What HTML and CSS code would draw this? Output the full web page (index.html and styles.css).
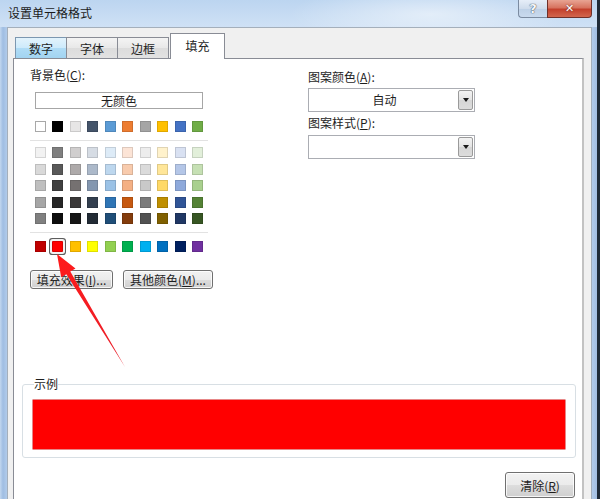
FILE: index.html
```html
<!DOCTYPE html>
<html lang="zh-CN">
<head>
<meta charset="utf-8">
<title>设置单元格格式</title>
<link rel="stylesheet" href="styles.css">
</head>
<body>
<div class="window">
  <div class="titlebar">
    <span class="title">设置单元格格式</span>
    <div class="caption">
      <div class="cap-btn help">?</div>
      <div class="cap-btn close">✕</div>
    </div>
  </div>
  <div class="client">
    <div class="tabs">
      <div class="tab hover">数字</div>
      <div class="tab">字体</div>
      <div class="tab">边框</div>
      <div class="tab active">填充</div>
    </div>
    <div class="panel">
      <div class="top">
        <div class="bg-col">
          <div class="label">背景色(<u>C</u>):</div>
          <div class="no-color">无颜色</div>
          <div class="swatch-row">
            <span class="sw white" style="background:#FFFFFF"></span>
            <span class="sw" style="background:#000000"></span>
            <span class="sw" style="background:#E7E6E6"></span>
            <span class="sw" style="background:#44546A"></span>
            <span class="sw" style="background:#5B9BD5"></span>
            <span class="sw" style="background:#ED7D31"></span>
            <span class="sw" style="background:#A5A5A5"></span>
            <span class="sw" style="background:#FFC000"></span>
            <span class="sw" style="background:#4472C4"></span>
            <span class="sw" style="background:#70AD47"></span>
          </div>
          <div class="sep"></div>
          <div class="theme-grid">
            <span class="sw" style="background:#F2F2F2"></span>
            <span class="sw" style="background:#7F7F7F"></span>
            <span class="sw" style="background:#D0CECE"></span>
            <span class="sw" style="background:#D6DCE4"></span>
            <span class="sw" style="background:#DDEBF7"></span>
            <span class="sw" style="background:#FCE4D6"></span>
            <span class="sw" style="background:#EDEDED"></span>
            <span class="sw" style="background:#FFF2CC"></span>
            <span class="sw" style="background:#D9E1F2"></span>
            <span class="sw" style="background:#E2EFDA"></span>

            <span class="sw" style="background:#D9D9D9"></span>
            <span class="sw" style="background:#595959"></span>
            <span class="sw" style="background:#AEAAAA"></span>
            <span class="sw" style="background:#ACB9CA"></span>
            <span class="sw" style="background:#BDD7EE"></span>
            <span class="sw" style="background:#F8CBAD"></span>
            <span class="sw" style="background:#DBDBDB"></span>
            <span class="sw" style="background:#FFE699"></span>
            <span class="sw" style="background:#B4C6E7"></span>
            <span class="sw" style="background:#C6E0B4"></span>

            <span class="sw" style="background:#BFBFBF"></span>
            <span class="sw" style="background:#404040"></span>
            <span class="sw" style="background:#757171"></span>
            <span class="sw" style="background:#8497B0"></span>
            <span class="sw" style="background:#9BC2E6"></span>
            <span class="sw" style="background:#F4B084"></span>
            <span class="sw" style="background:#C9C9C9"></span>
            <span class="sw" style="background:#FFD966"></span>
            <span class="sw" style="background:#8EA9DB"></span>
            <span class="sw" style="background:#A9D08E"></span>

            <span class="sw" style="background:#A6A6A6"></span>
            <span class="sw" style="background:#262626"></span>
            <span class="sw" style="background:#3A3838"></span>
            <span class="sw" style="background:#333F4F"></span>
            <span class="sw" style="background:#2F75B5"></span>
            <span class="sw" style="background:#C65911"></span>
            <span class="sw" style="background:#7B7B7B"></span>
            <span class="sw" style="background:#BF8F00"></span>
            <span class="sw" style="background:#305496"></span>
            <span class="sw" style="background:#548235"></span>

            <span class="sw" style="background:#808080"></span>
            <span class="sw" style="background:#0D0D0D"></span>
            <span class="sw" style="background:#161616"></span>
            <span class="sw" style="background:#222B35"></span>
            <span class="sw" style="background:#1F4E78"></span>
            <span class="sw" style="background:#833C0C"></span>
            <span class="sw" style="background:#525252"></span>
            <span class="sw" style="background:#806000"></span>
            <span class="sw" style="background:#203764"></span>
            <span class="sw" style="background:#375623"></span>
          </div>
          <div class="sep"></div>
          <div class="swatch-row std">
            <span class="sw" style="background:#C00000"></span>
            <span class="sw selected" style="background:#FF0000"></span>
            <span class="sw" style="background:#FFC000"></span>
            <span class="sw" style="background:#FFFF00"></span>
            <span class="sw" style="background:#92D050"></span>
            <span class="sw" style="background:#00B050"></span>
            <span class="sw" style="background:#00B0F0"></span>
            <span class="sw" style="background:#0070C0"></span>
            <span class="sw" style="background:#002060"></span>
            <span class="sw" style="background:#7030A0"></span>
          </div>
          <div class="btn-row">
            <div class="btn fx">填充效果(<u>I</u>)...</div>
            <div class="btn more">其他颜色(<u>M</u>)...</div>
          </div>
        </div>
        <div class="pattern-col">
          <div class="label">图案颜色(<u>A</u>):</div>
          <div class="combo">
            <span class="combo-text">自动</span>
            <span class="combo-btn"><span class="tri"></span></span>
          </div>
          <div class="label second">图案样式(<u>P</u>):</div>
          <div class="combo combo2">
            <span class="combo-text"></span>
            <span class="combo-btn"><span class="tri"></span></span>
          </div>
        </div>
      </div>
      <fieldset class="sample">
        <legend>示例</legend>
        <div class="sample-fill"></div>
      </fieldset>
      <div class="footer">
        <div class="btn clear">清除(<u>R</u>)</div>
      </div>
    </div>
  </div>
  <svg class="arrow" width="600" height="499" viewBox="0 0 600 499" aria-hidden="true">
    <defs>
      <linearGradient id="ag" x1="0" y1="0" x2="1" y2="1">
        <stop offset="0" stop-color="#ff1a1a"/>
        <stop offset="1" stop-color="#e8202c"/>
      </linearGradient>
    </defs>
    <polygon fill="url(#ag)" points="57,254 75.5,268.5 70.3,271.6 125,367 66.4,274.2 61.2,277.3"/>
  </svg>
</div>
</body>
</html>
```

FILE: styles.css
```css
* { box-sizing: border-box; }

html, body {
  margin: 0;
  padding: 0;
  background: #ffffff;
}

body {
  font-family: "Noto Sans CJK SC", "Microsoft YaHei", sans-serif;
  font-size: 12px;
  color: #1e1e1e;
}

u { text-decoration: underline; text-underline-offset: 1px; }

.window {
  position: relative;
  width: 600px;
  height: 499px;
  overflow: hidden;
  background: linear-gradient(to right, #c2d7ef 0, #9fbde2 3px, #b1cbea 7px, #b1cbea 592px, #a2bee2 597px);
  border-right: 3px solid #1f2b38;
  display: flex;
  flex-direction: column;
}

.titlebar {
  height: 27px;
  flex: none;
  display: flex;
  align-items: flex-start;
  background:
    radial-gradient(ellipse 140px 30px at 430px 14px, rgba(255,255,255,0.5), rgba(255,255,255,0) 100%),
    linear-gradient(to bottom, #bcd5f0, #cfe1f5);
}

.title {
  padding-left: 8px;
  line-height: 26px;
  font-size: 12px;
  color: #1b1b1b;
}

.caption {
  margin-left: auto;
  margin-right: 5px;
  display: flex;
}

.cap-btn {
  height: 18px;
  display: flex;
  align-items: center;
  justify-content: center;
  font-family: "DejaVu Sans", sans-serif;
  font-weight: bold;
}

.help {
  width: 29px;
  border: 1px solid #7b8ba0;
  border-top: none;
  border-right: none;
  border-bottom-left-radius: 4px;
  background: linear-gradient(to bottom, #e6eef8, #cfdcec 50%, #bdd0e6 51%, #c9daee);
  color: #f5f8fb;
  font-size: 13px;
  text-shadow: 0 0 1px #3c4654, 0 0 1px #3c4654;
}

.close {
  width: 45px;
  border: 1px solid #6f3029;
  border-top: none;
  border-bottom-right-radius: 4px;
  background: linear-gradient(to bottom, #e8a493, #d7735f 45%, #c3402c 55%, #d2664d);
  color: #ffffff;
  font-size: 11px;
  text-shadow: 0 0 2px #5a1d16;
}

.client {
  flex: 1;
  margin-left: 7px;
  width: 585px;
  background: #f0f0f0;
  border: 1px solid #a4afbb;
  border-bottom: none;
  display: flex;
  flex-direction: column;
}

.tabs {
  height: 30px;
  flex: none;
  display: flex;
  align-items: flex-end;
  padding-left: 7px;
}

.tab {
  width: 52px;
  height: 21px;
  margin-right: -1px;
  border: 1px solid #898c95;
  border-bottom: none;
  background: linear-gradient(to bottom, #f4f4f4, #e8e8e8 50%, #dcdcdc 51%, #e2e2e2);
  display: flex;
  align-items: center;
  justify-content: center;
  font-size: 12px;
}

.tab.hover {
  background: linear-gradient(to bottom, #e3f3fc, #cdeafb 50%, #b0dcf6 51%, #a2d4f1);
  border-color: #7c97b0;
}

.tab.active {
  width: 55px;
  height: 26px;
  margin-left: 2px;
  margin-bottom: -1px;
  position: relative;
  z-index: 1;
  background: #ffffff;
  padding-bottom: 2px;
}

.panel {
  flex: 1;
  margin-left: 5px;
  width: 571px;
  background: #ffffff;
  border: 1px solid #898c95;
  border-right: 2px solid #c2c2c2;
  border-bottom: none;
  padding-top: 8px;
  display: flex;
  flex-direction: column;
}

.top {
  display: flex;
  align-items: flex-start;
}

.label {
  line-height: 16px;
  height: 16px;
  white-space: nowrap;
}

.bg-col {
  margin-left: 16px;
  width: 185px;
}

.no-color {
  margin: 9px 0 0 5px;
  width: 168px;
  height: 17px;
  border: 1px solid #a6a6a6;
  text-align: center;
  line-height: 15px;
}

.swatch-row {
  margin: 12px 0 0 5px;
  width: 168px;
  display: flex;
  justify-content: space-between;
}

.sw {
  display: block;
  width: 11px;
  height: 11px;
  box-shadow: inset 0 0 0 1px rgba(0, 0, 0, 0.12);
}

.sw.white {
  box-shadow: inset 0 0 0 1px #a8a8a8;
}

.sw.selected {
  border-radius: 1px;
  box-shadow: inset 0 0 0 1px rgba(0,0,0,0.15), 0 0 0 2px #f2f2f2, 0 0 0 3px #5c5c5c;
}

.sep {
  margin-top: 8px;
  width: 178px;
  height: 1px;
  background: #e2e2e2;
}

.theme-grid {
  margin: 6px 0 0 5px;
  width: 168px;
  display: grid;
  grid-template-columns: repeat(10, 11px);
  justify-content: space-between;
  row-gap: 5.5px;
}

.swatch-row.std {
  margin-top: 8px;
}

.btn-row {
  margin-top: 18px;
  display: flex;
  gap: 10px;
}

.btn {
  height: 19px;
  border: 1px solid #707070;
  border-radius: 3px;
  background: linear-gradient(to bottom, #f2f2f2, #ebebeb 50%, #dddddd 51%, #cfcfcf);
  box-shadow: inset 0 0 0 1px rgba(255,255,255,0.8);
  display: flex;
  align-items: center;
  justify-content: center;
  white-space: nowrap;
  font-size: 12px;
}

.btn.fx { width: 83px; }
.btn.more { width: 90px; }

.pattern-col {
  margin-left: 93px;
  width: 167px;
  padding-top: 2px;
}

.combo {
  margin-top: 3px;
  height: 24px;
  border: 1px solid #abadb3;
  display: flex;
  background: #ffffff;
}

.combo2 { margin-top: 4px; }

.label.second { margin-top: 3px; }

.combo-text {
  flex: 1;
  text-align: center;
  line-height: 22px;
  padding-left: 2px;
}

.combo-btn {
  width: 15px;
  margin: 1px 1px 1px 0;
  border: 1px solid #9a9a9a;
  border-radius: 2px;
  background: linear-gradient(to bottom, #f3f3f3, #e4e4e4 50%, #d6d6d6 51%, #dcdcdc);
  display: flex;
  align-items: center;
  justify-content: center;
}

.tri {
  width: 0;
  height: 0;
  border-left: 3.5px solid transparent;
  border-right: 3.5px solid transparent;
  border-top: 4px solid #1a1a1a;
}

.sample {
  margin: 87px 0 0 8px;
  width: 554px;
  padding: 8px 10px 8px 10px;
  border: 1px solid #d8dfe4;
  border-radius: 3px;
  min-inline-size: 0;
}

.sample legend {
  padding: 0;
  margin-left: 1px;
  line-height: 16px;
  font-size: 12px;
}

.sample-fill {
  height: 49px;
  background: #ff0000;
  box-shadow: 0 0 0 0.5px #d01010;
}

.footer {
  margin-top: 14px;
  display: flex;
  justify-content: flex-end;
  padding-right: 7px;
}

.btn.clear {
  width: 70px;
  height: 26px;
}

.arrow {
  position: absolute;
  left: 0;
  top: 0;
  pointer-events: none;
}
```
